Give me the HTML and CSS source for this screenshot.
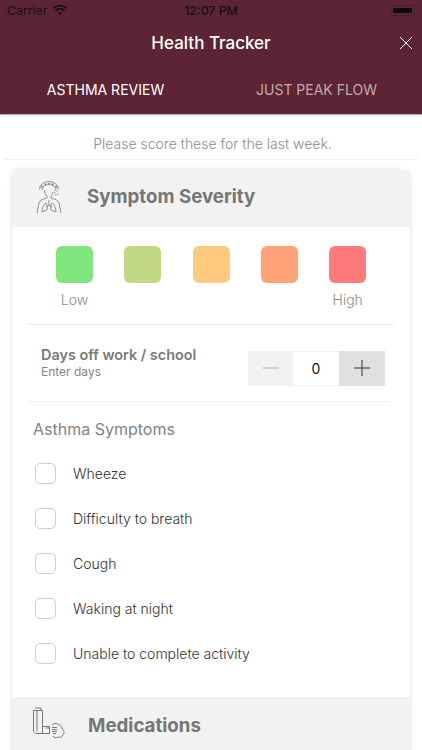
FILE: index.html
```html
<!DOCTYPE html>
<html lang="en">
<head>
<meta charset="utf-8">
<title>Health Tracker</title>
<link rel="stylesheet" href="styles.css">
</head>
<body>
<div class="screen">
  <header class="top">
    <div class="status">
      <div class="status-left">
        <span>Carrier</span>
        <svg class="wifi" viewBox="0 0 16 12" width="14" height="11"><path d="M8 11.500 5.600 8.700a3.600 3.600 0 0 1 4.800 0zM3.900 6.800l-1.400-1.600a8.300 8.300 0 0 1 11 0l-1.400 1.600a6.200 6.200 0 0 0-8.200 0zM1.500 4 .1 2.500a11.800 11.800 0 0 1 15.800 0L14.500 4a9.700 9.700 0 0 0-13 0z" fill="#111"/></svg>
      </div>
      <span class="clock">12:07 PM</span>
      <div class="battery"><span class="battery-fill"></span></div>
    </div>
    <div class="titlebar">
      <h1>Health Tracker</h1>
      <svg class="close" viewBox="0 0 14 14" width="14" height="14"><path d="M1 1l12 12M13 1 1 13" stroke="#fff" stroke-width="1" fill="none"/></svg>
    </div>
    <nav class="tabs">
      <span class="tab active">ASTHMA REVIEW</span>
      <span class="tab">JUST PEAK FLOW</span>
    </nav>
  </header>

  <p class="intro">Please score these for the last week.</p>

  <section class="card">
    <div class="card-head">
      <svg class="lungs" viewBox="0 0 28 34" width="28" height="34" fill="none" stroke="#777" stroke-width=".8">
        <path d="M4.500 9.500A9.500 8 0 0 1 23.500 9.500M7 10a7 6 0 0 1 14 0"/>
        <path d="M6 6l1.500 1.500M10 3.500l.8 2M14 3v2M18 3.500l-.8 2M22 6l-1.500 1.500" stroke-width="1.200"/>
        <path d="M9.500 10c0 3 1 5 2.500 6v2c-4 1-7 2-8 5l-2 10M18 12c-.5 2-1.500 3.500-2 4v2c4 1 7 2 8 5l2 10"/>
        <path d="M19 13l4-2M20 15l4-1M19 11l3-2" stroke-dasharray="1 .8"/>
        <path d="M14 20v5M14 25l-3 2M14 25l3 2M11 23c-2 1-4 5-4 9l5-2c1-2 0-5-1-7zM17 23c2 1 4 5 4 9l-5-2c-1-2 0-5 1-7z"/>
      </svg>
      <h2>Symptom Severity</h2>
    </div>

    <div class="scale">
      <div class="scale-item"><span class="swatch s1"></span><span class="scale-label">Low</span></div>
      <div class="scale-item"><span class="swatch s2"></span></div>
      <div class="scale-item"><span class="swatch s3"></span></div>
      <div class="scale-item"><span class="swatch s4"></span></div>
      <div class="scale-item"><span class="swatch s5"></span><span class="scale-label">High</span></div>
    </div>

    <div class="days">
      <div class="days-text">
        <strong>Days off work / school</strong>
        <span>Enter days</span>
      </div>
      <div class="stepper">
        <span class="step minus"><svg viewBox="0 0 16 16" width="16" height="16"><path d="M0 8h16" stroke="#aaa" stroke-width="1"/></svg></span>
        <span class="value">0</span>
        <span class="step plus"><svg viewBox="0 0 16 16" width="16" height="16"><path d="M0 8h16M8 0v16" stroke="#333" stroke-width="1"/></svg></span>
      </div>
    </div>

    <h3>Asthma Symptoms</h3>
    <ul class="checks">
      <li><span class="box"></span>Wheeze</li>
      <li><span class="box"></span>Difficulty to breath</li>
      <li><span class="box"></span>Cough</li>
      <li><span class="box"></span>Waking at night</li>
      <li><span class="box"></span>Unable to complete activity</li>
    </ul>

    <div class="card-head meds">
      <svg class="inhaler" viewBox="0 0 34 32" width="34" height="32" fill="none" stroke="#777" stroke-width="1">
        <path d="M1.500 3.500h9v16h7v7H3.500l-2-2z"/>
        <path d="M3 1h6v2.500M5 3.500v21M10.500 19.500v7M14 21h3"/>
        <path d="M20 20.500h5M20 22.500h5M20 24.500h5M21 26.500h3"/>
        <path d="M20 18c2-2 6-2 7 0 2 0 3 2 3 4 2 1 3 4 1 6-1 2-3 3-5 2-2 1-4 1-5-1"/>
      </svg>
      <h2>Medications</h2>
    </div>
  </section>
</div>
</body>
</html>
```

FILE: styles.css
```css
* { box-sizing: border-box; }
html, body { margin: 0; padding: 0; }
body { font-family: Inter, "Noto Sans", sans-serif; background: #fff; }
.screen { width: 422px; height: 750px; overflow: hidden; background: #fff; }

.top { height: 115px; background: #5c2434; border-bottom: 1px solid #b9aeb1; box-shadow: 0 1px 3px rgba(0,0,0,.12); }
.status { height: 20px; padding: 0 7px; display: grid; grid-template-columns: 1fr auto 1fr; align-items: center; font-size: 12.300px; color: #141014; }
.status-left { display: flex; align-items: center; gap: 6px; }
.clock { font-weight: 500; }
.battery { justify-self: end; width: 25px; height: 11px; padding: 2px; border: 1px solid #45202c; border-radius: 3px; }
.battery-fill { display: block; height: 100%; background: #0c0c0c; border-radius: 1px; }
.titlebar { height: 46px; display: flex; align-items: center; justify-content: center; position: relative; }
.titlebar h1 { margin: 0; font-size: 17px; font-weight: 500; color: #fff; }
.close { position: absolute; right: 9px; top: 16px; }
.tabs { display: flex; height: 48px; }
.tab { flex: 1; padding-top: 14px; text-align: center; font-size: 14px; color: #c4aab2; line-height: 20px; }
.tab.active { color: #fff; }

.intro { margin: 0 4px; height: 45px; padding: 20px 0 0 3px; border-bottom: 1px solid #efefef; text-align: center; font-size: 14px; line-height: 18px; font-weight: 300; color: #8c8c8c; }

.card { margin: 10px 12px 0; background: #fff; border-radius: 8px 8px 0 0; box-shadow: 0 0 5px rgba(0,0,0,.14); }
.card-head { height: 57px; background: #f2f2f2; border-radius: 8px 8px 0 0; display: flex; align-items: center; padding: 0 0 4px 23px; }
.card-head h2 { margin: 0 0 0 24px; font-size: 18.700px; font-weight: 700; color: #767676; }
.lungs { flex: none; }

.scale { display: flex; gap: 31.300px; padding: 19px 0 0 44px; height: 98px; position: relative; }
.scale::after { content: ""; position: absolute; left: 17px; right: 17px; bottom: 0; border-bottom: 1px solid #e4e4e4; }
.scale-item { width: 37px; display: flex; flex-direction: column; align-items: center; }
.swatch { width: 37px; height: 37px; border-radius: 6px; flex: none; }
.s1 { background: #80e77f; }
.s2 { background: #c1d781; }
.s3 { background: #ffca7d; }
.s4 { background: #ffa27a; }
.s5 { background: #ff7b7b; }
.scale-label { margin-top: 8px; font-size: 14px; line-height: 18px; font-weight: 300; color: #8e8e8e; white-space: nowrap; }

.days { height: 77px; margin: 0 21px 0 17px; padding: 0 4px 0 12px; display: flex; align-items: center; justify-content: space-between; border-bottom: 1px solid #ececec; }
.days-text { display: flex; flex-direction: column; margin-top: -2px; }
.days-text strong { font-size: 14.400px; line-height: 18px; font-weight: 600; color: #7a7a7a; }
.days-text span { font-size: 12px; line-height: 15px; color: #858585; }
.stepper { display: flex; width: 137px; height: 35px; background: #f2f2f2; margin-top: 10px; }
.step { width: 45px; display: flex; align-items: center; justify-content: center; }
.plus { background: #e0e0e0; width: 46px; }
.value { width: 46px; margin: 1px 0; background: #fff; text-align: center; font-size: 14px; line-height: 33px; color: #111; }

h3 { margin: 17px 0 0 21px; font-size: 16px; line-height: 20px; font-weight: 400; color: #828282; }
.checks { list-style: none; margin: 12px 0 0 23px; padding: 0; height: 246px; }
.checks li { height: 45px; display: flex; align-items: center; gap: 17px; font-size: 14px; font-weight: 300; color: #333; }
.box { width: 21px; height: 21px; border: 1px solid #cfcfcf; border-radius: 5px; background: #fff; }

.meds { border-radius: 0; height: 60px; padding: 0 0 4px 20px; }
.meds h2 { margin-left: 22px; }
.inhaler { flex: none; margin-bottom: 4px; }
```
